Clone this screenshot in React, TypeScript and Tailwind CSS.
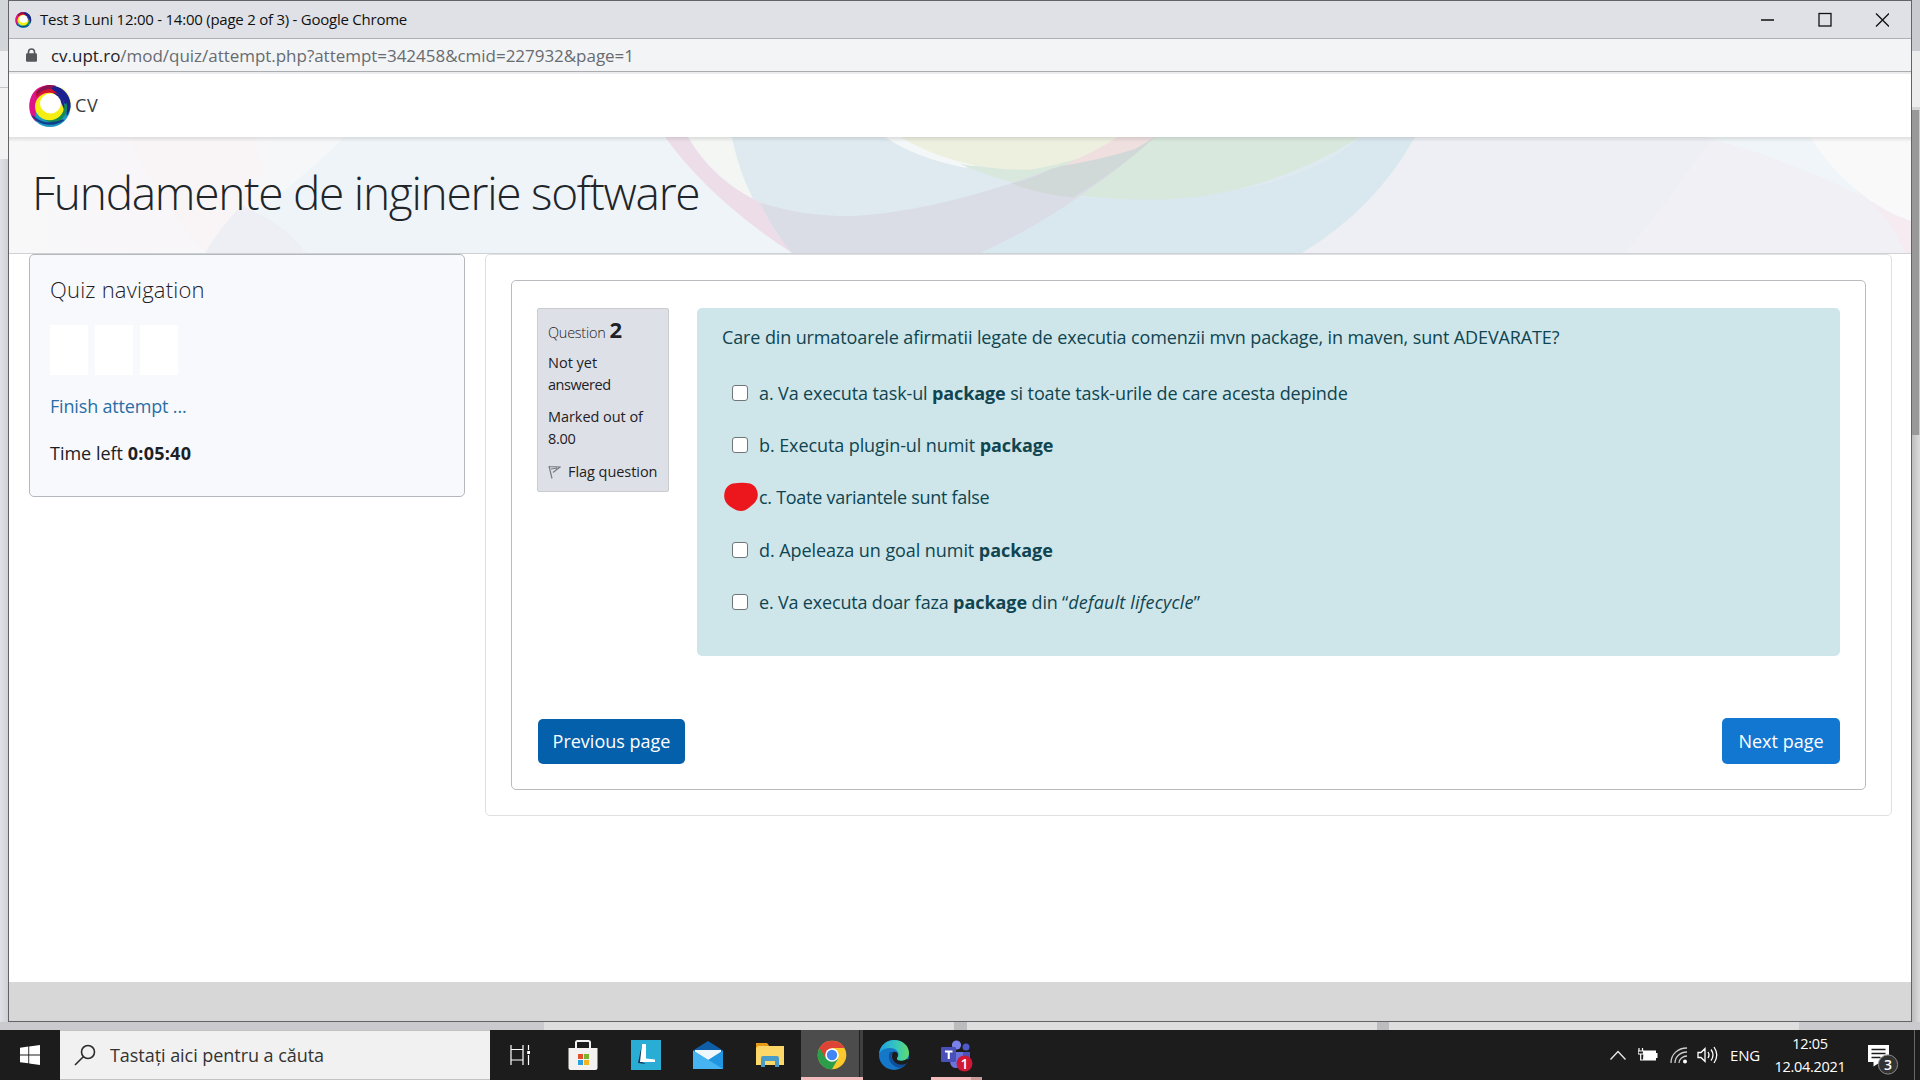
import React from "react";

function RingLogo({ className }: { className: string }) {
  return (
    <svg viewBox="0 0 44 46" className={className}>
      <path d="M33 4c6 4 10 11 10 18 0 6-4 13-9 16z" fill="#f4f58a" opacity=".7" />
      <circle cx="21.500" cy="23.500" r="20.500" fill="#1d97c4" />
      <path d="M1 25C0 11 9 2 21 2l4 8C9 10 5 25 8 39 4 36 1 31 1 25z" fill="#e0128a" />
      <path d="M7 10C12 2 25 0 33 7l-2 8C25 8 14 8 8 15z" fill="#d5122f" />
      <path d="M8 9C14 2 22 1 28 3L22 6C17 6 12 8 8 13z" fill="#8c1150" />
      <path d="M25 3c11 1 18 11 17 21-1 4-2 7-4 9 1-10-4-20-15-27z" fill="#1a2290" />
      <path d="M38 20c3 9-4 18-13 21l-9-4c10 0 17-8 18-14z" fill="#128a52" />
      <path d="M4 33c8 8 20 9 31 4-8 5-22 7-31-4z" fill="#0f3f8c" stroke="#0f3f8c" strokeWidth="1.500" />
      <ellipse cx="21" cy="23.500" rx="14.500" ry="13.800" fill="#f6ee12" />
      <path d="M24 9.500c9 1 13 9 11.500 17C33 20 31 14 24 9.500z" fill="#1a2290" />
      <ellipse cx="22" cy="20.500" rx="10.500" ry="10" fill="#fff" />
    </svg>
  );
}

function Banner() {
  return (
    <svg viewBox="9 137 1902 117" preserveAspectRatio="none" className="absolute inset-0 h-full w-full">
      <defs>
        <linearGradient id="bannerBase" x1="0" x2="1">
          <stop offset="0" stopColor="#f8f8f9" />
          <stop offset=".07" stopColor="#f8f6f8" />
          <stop offset=".15" stopColor="#f6f7f9" />
          <stop offset="1" stopColor="#f8f8f9" />
        </linearGradient>
        <linearGradient id="bannerShade" x1="0" x2="0" y1="0" y2="1">
          <stop offset="0" stopColor="#777" stopOpacity=".2" />
          <stop offset="1" stopColor="#777" stopOpacity="0" />
        </linearGradient>
      </defs>
      <rect x="9" y="137" width="1902" height="117" fill="url(#bannerBase)" />
      <path d="M130 137H255L262 170 225 254H205Q150 190 130 137z" fill="#f9f5f7" />
      <path d="M345 137Q290 190 205 254H800L732 137z" fill="#eff4f8" />
      <path d="M242 206Q222 225 205 254H306Q285 225 242 206z" fill="#edeff4" />
      <path d="M688 137H732Q742 175 762 206Q715 180 688 137z" fill="#f3f6f3" />
      <path d="M732 137Q745 205 792 254H1302Q1375 210 1415 137z" fill="#deeaf0" />
      <path d="M1070 197Q1280 210 1360 137H1415Q1375 210 1302 254H980Z" fill="#d9e7ee" />
      <path d="M1415 137Q1375 210 1302 254H1911V137z" fill="#edeff4" />
      <path d="M1712 137Q1670 200 1625 254H1911V137z" fill="#f0f0f5" />
      <path d="M1705 137H1815L1860 196Q1790 160 1705 137z" fill="#eff5f8" />
      <path d="M1810 137Q1850 200 1911 222V137z" fill="#f9f9fa" />
      <path d="M1868 200Q1888 215 1911 222V254H1905Q1893 222 1868 200z" fill="#f6ebf1" />
      <path d="M885 137Q915 158 965 168L1000 160 905 137z" fill="#f4f7f7" />
      <path d="M960 164Q1040 200 1150 200T1360 137H1130Q1040 180 960 164z" fill="#d8e8dc" />
      <path d="M900 137Q960 172 1030 170Q1090 160 1130 137z" fill="#edf0df" />
      <path d="M665 137H688Q712 180 760 203L775 232 792 254Q710 200 665 137z" fill="#eddde8" />
      <path d="M760 203Q800 217 850 217Q940 212 1052 169Q1110 153 1155 137Q1070 213 980 254H792Q772 230 760 203z" fill="#dadce6" />
      <path d="M1012 184Q1035 178 1052 169Q1110 153 1155 137Q1120 170 1073 198Q1040 195 1012 184z" fill="#d1d9d8" />
      <path d="M1118 137H1155L1135 149Q1100 160 1062 166Q1095 152 1118 137z" fill="#efdfdf" />
      <rect x="9" y="137" width="1902" height="5" fill="url(#bannerShade)" />
    </svg>
  );
}

function T({ children, className = "" }: { children: React.ReactNode; className?: string }) {
  return <span className={"inline-block whitespace-nowrap " + className}>{children}</span>;
}

function Option({
  children,
  marked,
  className = "",
  textClass,
}: {
  children: React.ReactNode;
  marked?: boolean;
  className?: string;
  textClass: string;
}) {
  return (
    <div className={"flex items-center " + className}>
      <div className="relative ml-[35px] h-4 w-4 shrink-0">
        {marked ? (
          <svg viewBox="0 0 36 30" className="absolute -left-[9px] -top-[7px] h-[30px] w-9 max-w-none">
            <path
              d="M10 1.500C16 .500 22 .300 27 1.500 32 3 35 8 34.800 13.500 34.500 18 32 21 28 24 25 26.500 22 29 18 29 14 29 11 27 7 24.500 3 21.500 1 18 1.200 13.500 1.500 7 5 2.500 10 1.500z"
              fill="#ec171c"
            />
          </svg>
        ) : (
          <div className="h-4 w-4 rounded-[3px] border border-[#6f7678] bg-white" />
        )}
      </div>
      <T className={"ml-[11px] " + textClass}>{children}</T>
    </div>
  );
}

function TaskButton({ children, className = "w-[62px]" }: { children: React.ReactNode; className?: string }) {
  return <div className={"relative flex h-full items-center justify-center " + className}>{children}</div>;
}

function Taskbar() {
  return (
    <div className="flex h-[50px] shrink-0 bg-[#1c1c1c] text-white">
      <div className="flex w-[60px] items-center justify-center">
        <svg viewBox="0 0 20 20" className="h-5 w-5" fill="#fff">
          <path d="M0 2.800 8.300 1.600V9.500H0zM9.200 1.500 20 0V9.500H9.200zM0 10.400H8.300V18.300L0 17.200zM9.200 10.400H20V20L9.200 18.400z" />
        </svg>
      </div>
      <div className="flex w-[430px] items-center border-y border-[#c2c2c2] bg-[#f1f1f1] pl-[14px]">
        <svg viewBox="0 0 22 22" className="h-[22px] w-[22px]" fill="none" stroke="#2a2a2a" strokeWidth="1.600">
          <circle cx="14" cy="8" r="6.500" />
          <path d="M9.300 12.700 1 21" />
        </svg>
        <T className="ml-[14px] text-[18px] leading-6 tracking-[-0.05px] text-[#333]">Tastați aici pentru a căuta</T>
      </div>
      <TaskButton className="w-[61px]">
        <svg viewBox="0 0 21 20" className="h-5 w-[21px]" fill="none" stroke="#fff" strokeWidth="1.200">
          <path d="M1 0v4.500H13V0M1 20v-5H13v5M1 4.500V15M13 4.500V15M18.500 0V5M18.500 10V20" />
          <rect x="17.200" y="6" width="2.800" height="3" fill="#fff" stroke="none" />
        </svg>
      </TaskButton>
      <TaskButton className="w-16">
        <svg viewBox="0 0 30 30" className="h-[30px] w-[30px]">
          <path d="M8 9V2.500Q8 1 9.500 1h11Q22 1 22 2.500V9" fill="none" stroke="#f3f3f3" strokeWidth="2" />
          <path d="M.500 8h29V28q0 2-2 2h-25q-2 0-2-2z" fill="#f4f2f0" />
          <path d="M10 14h5v5h-5z" fill="#e2502c" />
          <path d="M16 14h5v5h-5z" fill="#7cb32e" />
          <path d="M10 20h5v5h-5z" fill="#2aa0dc" />
          <path d="M16 20h5v5h-5z" fill="#f3b41c" />
        </svg>
      </TaskButton>
      <TaskButton>
        <svg viewBox="0 0 30 30" className="h-[30px] w-[30px]">
          <path d="M0 0h30v30H0z" fill="#2aadd4" />
          <path d="M7 23 11 4v18l4 2z" fill="#173a57" />
          <path d="M11 4h4v14.500l9 1V22H9z" fill="#fff" />
        </svg>
      </TaskButton>
      <TaskButton>
        <svg viewBox="0 0 30 28" className="h-7 w-[30px]">
          <path d="M0 9.500 15 0l15 9.500V14H0z" fill="#0f5ea8" />
          <path d="M2 9h26v11H2z" fill="#eef7fc" />
          <path d="M0 9.500 15 19 30 9.500V28H0z" fill="#2196e0" />
          <path d="M0 9.500 30 28H0z" fill="#45b4f0" />
        </svg>
      </TaskButton>
      <TaskButton>
        <svg viewBox="0 0 28 24" className="h-6 w-7">
          <path d="M0 0h11l2 2.500V8H0z" fill="#e69a17" />
          <path d="M2 3h26v18H0V5z" fill="#fbd667" />
          <path d="M0 7h28v15H0z" fill="#fcd869" />
          <path d="M5 24V15q0-2 2-2h14q2 0 2 2v9h-4v-6H9v6z" fill="#4a9cc8" />
        </svg>
      </TaskButton>
      <TaskButton className="w-[62px] bg-[#4c4c4c]">
        <div className="absolute right-0 top-0 h-full w-1 border-l border-[#222] bg-[#3f3f3f]" />
        <svg viewBox="0 0 30 30" className="h-[30px] w-[30px]">
          <circle cx="15" cy="15" r="14.300" fill="#fbc92b" />
          <path d="M15 15 2.600 7.850A14.300 14.300 0 0 0 15 29.300L21.200 18.600z" fill="#2b9e4c" />
          <path d="M2.600 7.850A14.300 14.300 0 0 1 27.400 8H15L8.700 18.600z" fill="#dd4435" />
          <circle cx="15" cy="15" r="6.800" fill="#fff" />
          <circle cx="15" cy="15" r="5.200" fill="#4286f4" />
        </svg>
        <div className="absolute bottom-0 left-0 h-[3px] w-[62px] bg-[#f3bcbc]" />
      </TaskButton>
      <TaskButton>
        <svg viewBox="0 0 30 30" className="h-[30px] w-[30px]">
          <defs>
            <linearGradient id="edgeTop" x1="0" x2="1">
              <stop offset="0" stopColor="#1f9fe0" />
              <stop offset=".55" stopColor="#35c5c0" />
              <stop offset="1" stopColor="#5fdc6a" />
            </linearGradient>
          </defs>
          <circle cx="15" cy="15" r="15" fill="#1477c8" />
          <path d="M0 14C1 5 8 0 15 0c9 0 15 6 15 13 0 5-4 8-8 8-3 0-5-1-4-3 4-5-1-10-7-10C6 8 2 10 0 14z" fill="url(#edgeTop)" />
          <path d="M11 12c-3 5 0 14 9 16 3-.5 6-2 8-5-6 3-13 1-15-4-1-3 0-5 1-7z" fill="#104f9e" />
          <path d="M14 12c5-1 6 3 4 6-1 3 6 4 10 1l2 1-2.500 3.500C20 27 13 22 13 17c0-2 0-4 1-5z" fill="#1c1c1c" />
        </svg>
      </TaskButton>
      <TaskButton>
        <svg viewBox="0 0 32 32" className="ml-[2px] mt-[2px] h-8 w-8">
          <circle cx="25" cy="7" r="3.500" fill="#5059c9" />
          <path d="M20 12h9v9q-1 5-6 5z" fill="#4a52be" />
          <circle cx="15.500" cy="5" r="4.600" fill="#7b83eb" />
          <path d="M9 12h13v11q-2 5-7 5t-6-6z" fill="#6b73dd" />
          <rect x="0" y="7" width="15" height="15" rx="1" fill="#4951b8" />
          <path d="M4 10.500h7.500v2H8.800V19H6.700v-6.500H4z" fill="#fff" />
          <circle cx="23.500" cy="23.500" r="8" fill="#cf1736" />
        </svg>
        <span className="absolute left-[31.500px] top-[25px] w-4 text-center text-[14px] font-semibold leading-[17px]">1</span>
        <div className="absolute bottom-0 left-[6px] h-[3px] w-[51px] border-r-[11px] border-[#c99b9b] bg-[#f3bcbc]" />
      </TaskButton>
      <div className="ml-auto flex items-center">
        <svg viewBox="0 0 16 10" className="h-[10px] w-4" fill="none" stroke="#e8e8e8" strokeWidth="1.400">
          <path d="M.500 9.500 8 1.500l7.500 8" />
        </svg>
        <svg viewBox="0 0 20 14" className="ml-3 h-[14px] w-5">
          <path d="M1 0v3M4.500 0v3M0 3h5.500v3H0zM2.700 6v6H5" fill="none" stroke="#fff" strokeWidth="1.200" />
          <path d="M5.500 2.500H18V5h1.500v5H18v2.500H5z" fill="#fff" />
        </svg>
        <svg viewBox="0 0 18 17" className="ml-3 h-[17px] w-[18px]" fill="none" stroke="#cfcfcf" strokeWidth="1.300">
          <path d="M1 16C1 7 8 1 17 1M5 16C5 10 10 5 17 5M9 16c0-4 4-7 8-7" />
          <circle cx="15" cy="14.500" r="2" fill="#fff" stroke="none" />
        </svg>
        <svg viewBox="0 0 21 18" className="ml-[9px] h-[18px] w-[21px]" fill="none" stroke="#fff" strokeWidth="1.300">
          <path d="M1 6.500h3L8 2.500v13L4 11.500H1zM11 6q2 3 0 6M14 3.500q4 5.500 0 11M17 1q5.500 8 0 16" />
        </svg>
        <T className="ml-3 text-[15px] leading-5 tracking-[-0.2px]">ENG</T>
        <div className="ml-[15px] flex w-[70px] flex-col items-center text-[14.500px] leading-[23px] tracking-[-0.3px]">
          <T>12:05</T>
          <T>12.04.2021</T>
        </div>
        <div className="relative ml-[23px] mt-[9px] h-[30px] w-[46px]">
          <svg viewBox="0 0 32 30" className="block h-[30px] w-8">
            <path d="M0 0h21v18H11l-5.500 3.500V17H0z" fill="#fff" />
            <path d="M3.500 4.500h14M3.500 8.500h14M3.500 12.500h9" stroke="#1c1c1c" strokeWidth="1.500" />
            <circle cx="20" cy="19.500" r="9.600" fill="#333" stroke="#8a8a8a" />
          </svg>
          <span className="absolute left-[15px] top-[11px] w-[10px] text-center text-[14px] font-semibold leading-[17px]">3</span>
        </div>
        <div className="h-[50px] w-[6px] border-l border-[#666]" />
      </div>
    </div>
  );
}

export default function App() {
  return (
    <div className="flex h-[1080px] w-[1920px] flex-col overflow-hidden bg-[#dcdce1] font-['Open_Sans','Noto_Sans',sans-serif] text-[#1d2125]">
      <div className="flex h-[1022px] shrink-0">
        <div className="flex w-2 flex-col">
          <div className="h-[51px] bg-[#d3d6d8]" />
          <div className="h-[37px] border-b border-[#c5c5c8] bg-[#f1f2f3]" />
          <div className="h-[71px] bg-[#f2f2f3]" />
          <div className="grow bg-linear-to-r from-[#e1e1e8] to-[#cfcfd6]" />
        </div>
        <div className="flex w-[1904px] flex-col border border-[#626267] bg-white">
          <div className="flex h-[38px] shrink-0 items-center border-b border-[#aeb0b5] bg-[#dfe1e6] pl-[6px]">
            <RingLogo className="h-[18px] w-[17px]" />
            <T className="-mt-[2px] ml-2 text-[15px] leading-5 tracking-[-0.24px] text-[#111]">
              Test 3 Luni 12:00 - 14:00 (page 2 of 3) - Google Chrome
            </T>
            <svg viewBox="0 0 130 16" className="ml-auto mr-[22px] h-4 w-[130px]" fill="none" stroke="#111" strokeWidth="1.300">
              <path d="M2 8h13M117 1.500l13 13M130 1.500l-13 13" />
              <rect x="60" y="1.500" width="12" height="12.500" />
            </svg>
          </div>
          <div className="flex h-[33px] shrink-0 items-center border-b border-[#aaacb0] bg-[#f2f4f6] pl-[17px]">
            <svg viewBox="0 0 11 14" className="h-[14px] w-[11px]">
              <path d="M2.500 6V4a3 3 0 0 1 6 0v2" fill="none" stroke="#54575b" strokeWidth="1.600" />
              <rect x="0" y="5.200" width="11" height="8.600" rx="1.200" fill="#54575b" />
            </svg>
            <T className="ml-[14px] mt-[2px] text-[17px] leading-6 tracking-[-0.03px] text-[#686b70]">
              <span className="text-[#1f2124]">cv.upt.ro</span>/mod/quiz/attempt.php?attempt=342458&amp;cmid=227932&amp;page=1
            </T>
          </div>
          <div className="flex h-[65px] shrink-0 items-center border-t-2 border-[#ececee] pl-[19px]">
            <RingLogo className="h-[46px] w-[45px]" />
            <T className="-mt-[2px] ml-[2px] text-[18px] leading-6 tracking-[0.6px] text-[#3a3d40]">CV</T>
          </div>
          <div className="relative h-[116px] shrink-0">
            <Banner />
            <h1 className="relative pl-[23px] pt-6 text-[46px] font-light leading-[62px] tracking-[-1.26px] text-[#20252a]">
              <T>Fundamente de inginerie software</T>
            </h1>
          </div>
          <div className="flex grow items-start border-t border-[#cfd2d5] pl-5 pr-[19px]">
            <aside className="h-[243px] w-[436px] shrink-0 rounded-[5px] border border-[#b4b7bb] bg-[#f8f9fd] pl-[20px] pt-[19px]">
              <h2 className="text-[22px] font-light leading-[30px] tracking-[0.2px]">
                <T>Quiz navigation</T>
              </h2>
              <div className="mt-[21px] flex gap-[7px]">
                <div className="h-[50px] w-[38px] bg-white" />
                <div className="h-[50px] w-[38px] bg-white" />
                <div className="h-[50px] w-[38px] bg-white" />
              </div>
              <div className="mt-[17px] text-[18px] leading-7 tracking-[-0.17px] text-[#2a6ea5]">
                <T>Finish attempt ...</T>
              </div>
              <div className="mt-[19px] text-[18px] leading-7">
                <T>
                  Time left <b className="font-bold tracking-[0.25px]">0:05:40</b>
                </T>
              </div>
            </aside>
            <main className="ml-5 h-[562px] grow rounded-[5px] border border-[#dee0e2] p-[25px]">
              <div className="h-[510px] rounded-[5px] border border-[#b9bbbe] px-[25px] pt-[27px]">
                <div className="flex items-start justify-between">
                  <div className="h-[184px] w-[132px] rounded-[2px] border border-[#caccd0] bg-[#dee0e7] pl-[10px] pt-1 text-[14.500px] leading-[22px]">
                    <div className="flex h-[39px] items-baseline">
                      <T className="font-light leading-[32px] tracking-[-0.25px]">Question</T>
                      <T className="ml-1 text-[22px] font-bold leading-[32px]">2</T>
                    </div>
                    <T>Not yet</T>
                    <br />
                    <T className="tracking-[-0.45px]">answered</T>
                    <div className="mt-[10px]">
                      <T className="tracking-[-0.05px]">Marked out of</T>
                    </div>
                    <T className="tracking-[-0.3px]">8.00</T>
                    <div className="mt-[11px] flex items-center">
                      <svg viewBox="0 0 13 14" className="h-[14px] w-[13px]" fill="none" stroke="#777a80" strokeWidth="1.200">
                        <path d="M1 1l3 12.500M1 1.500 12 2 5 7.500M3 4l6-1" />
                      </svg>
                      <T className="ml-[7px] tracking-[-0.05px]">Flag question</T>
                    </div>
                  </div>
                  <div className="h-[348px] w-[1143px] rounded-[5px] bg-[#cee6ea] pt-[17px] text-[18px] leading-6 text-[#0f4450]">
                    <div className="pl-[25px]">
                      <T className="tracking-[-0.12px]">
                        Care din urmatoarele afirmatii legate de executia comenzii mvn package, in maven, sunt ADEVARATE?
                      </T>
                    </div>
                    <Option className="mt-8" textClass="tracking-[-0.12px]">
                      a. Va executa task-ul <b>package</b> si toate task-urile de care acesta depinde
                    </Option>
                    <Option className="mt-7" textClass="tracking-[-0.09px]">
                      b. Executa plugin-ul numit <b>package</b>
                    </Option>
                    <Option className="mt-7" textClass="tracking-[-0.28px]" marked>
                      c. Toate variantele sunt false
                    </Option>
                    <Option className="mt-[29px]" textClass="tracking-[-0.07px]">
                      d. Apeleaza un goal numit <b>package</b>
                    </Option>
                    <Option className="mt-7" textClass="tracking-[-0.18px]">
                      e. Va executa doar faza <b className="tracking-[-0.05px]">package</b> din “
                      <i className="tracking-[0.18px]">default lifecycle</i>”
                    </Option>
                  </div>
                </div>
                <div className="mt-[62px] flex items-center justify-between text-[18px] text-white">
                  <button className="ml-px flex h-[45px] w-[147px] items-center justify-center rounded-[5px] bg-[#0560ab]">
                    <T>Previous page</T>
                  </button>
                  <button className="flex h-[46px] w-[118px] items-center justify-center rounded-[5px] bg-[#1177d1]">
                    <T>Next page</T>
                  </button>
                </div>
              </div>
            </main>
          </div>
          <div className="h-[39px] shrink-0 bg-[#d7d7d7]" />
        </div>
        <div className="flex w-2 flex-col">
          <div className="h-[51px] bg-[#c9cbd0]" />
          <div className="h-[56px] bg-[#ededee]" />
          <div className="h-[3px] bg-[#d5d5d5]" />
          <div className="h-[325px] border-r border-[#ccc] bg-[#999]" />
          <div className="grow bg-linear-to-r from-[#bdbdbf] to-[#dcdcdd]" />
        </div>
      </div>
      <div className="flex h-2 shrink-0 justify-start bg-[#cacace]">
        <div className="w-[544px]" />
        <div className="w-[410px] bg-[#dedede]" />
        <div className="w-[13px] bg-[#bcbcbf]" />
        <div className="w-[410px] bg-[#dedede]" />
        <div className="w-[12px] bg-[#bcbcbf]" />
        <div className="w-[410px] bg-[#dedede]" />
      </div>
      <Taskbar />
    </div>
  );
}
